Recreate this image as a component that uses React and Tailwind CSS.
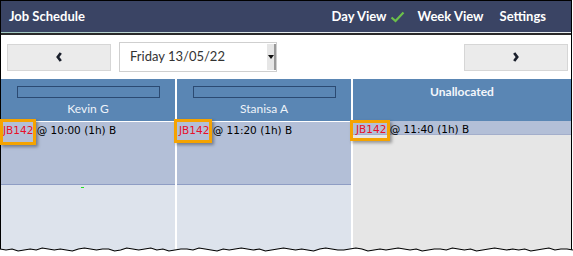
import React from "react";

const tornY = [2,3,2,4,3,2,3,1,2,3,2,3,4,2,1,2,3,2,2,4,3,1,2,3,2,1,3,2,4,3,2,2,3,1,2,3,4,2,3,2,1,2,3,2,4,3,2,1,2,3,2,3,4,2,1,2,3,3,2,1,2,4,3,2,3,2,1,2,3,2,4,3,2,2,3,1,2,3,2,4,3,2,1,2,3,2,3,2,4,3,2,1,3,2,2,3];

function Torn() {
  const pts = [];
  const step = 573 / (tornY.length - 1);
  tornY.forEach((y, i) => pts.push([Math.round(i * step * 10) / 10, y + 1]));
  const line = pts.map((p) => p.join(",")).join(" ");
  const poly = "0,12 " + line + " 573,12";
  return (
    <svg className="absolute left-0 top-[246px]" width="573" height="10" viewBox="0 0 573 10">
      <polygon points={poly} fill="#ffffff" />
      <polyline points={line} fill="none" stroke="#000" strokeWidth="1.2" />
    </svg>
  );
}

function Chevron({ dir }) {
  return (
    <svg width="6" height="10" viewBox="0 0 6 10">
      {dir === "left" ? (
        <path d="M4.8 1 L1.8 5 L4.8 9" fill="none" stroke="#1a1f2b" strokeWidth="2.7" />
      ) : (
        <path d="M1.2 1 L4.2 5 L1.2 9" fill="none" stroke="#1a1f2b" strokeWidth="2.7" />
      )}
    </svg>
  );
}

function Event({ time }) {
  return (
    <div className="pl-[2px] pt-[2px] text-[10.5px] leading-[13px] font-['DejaVu_Sans',sans-serif] text-black whitespace-nowrap">
      <span className="text-[#e8102a]">JB142</span> @ {time} (1h) B
    </div>
  );
}

export default function App() {
  return (
    <div className="w-[573px] h-[256px] bg-white relative overflow-hidden font-['Lato',sans-serif]">
      <div className="w-[572px] h-[256px] border-l border-t border-r border-black flex flex-col">
        <div className="h-[31px] bg-[#3a4464] flex items-center pl-[8px] pr-[25px] text-white text-[13px] font-bold">
          <div>Job Schedule</div>
          <div className="ml-auto flex items-center">
            <span>Day View</span>
            <svg className="ml-[3px]" width="15" height="12" viewBox="0 0 15 12">
              <path d="M1.5 6.5 L5.5 10 L13.5 1.5" fill="none" stroke="#6cc04a" strokeWidth="2.2" />
            </svg>
            <span className="ml-[13px]">Week View</span>
            <span className="ml-[16px]">Settings</span>
          </div>
        </div>
        <div className="h-px bg-gradient-to-r from-[#9fc7c0] via-[#e8eef0] to-[#e8eef0]" />
        <div className="h-[2px] bg-[#2a2a2a]" />
        <div className="h-[44px] flex items-center pl-[6px] pr-[3px]">
          <div className="w-[104px] h-[27px] bg-[#ebebeb] border border-[#d6d6d6] flex items-center justify-center">
            <Chevron dir="left" />
          </div>
          <div className="ml-[8px] w-[158px] h-[30px] border border-[#cfcfcf] bg-white flex items-center">
            <span className="pl-[10px] text-[13px] text-[#333] font-['Lato',sans-serif]">Friday 13/05/22</span>
            <div className="ml-auto h-[26px] w-[9px] bg-[#e6e6e6] border-r-2 border-[#9a9a9a] flex items-center justify-center">
              <svg width="6" height="4" viewBox="0 0 6 4"><path d="M0 0 L6 0 L3 4 Z" fill="#111" /></svg>
            </div>
          </div>
          <div className="ml-auto w-[104px] h-[27px] bg-[#ebebeb] border border-[#d6d6d6] flex items-center justify-center">
            <Chevron dir="right" />
          </div>
        </div>
        <div className="flex-1 grid grid-cols-[174px_174px_1fr] gap-x-[2px] bg-white">
          {[
            { name: "Kevin G", time: "10:00" },
            { name: "Stanisa A", time: "11:20" },
          ].map((c) => (
            <div key={c.name} className="flex flex-col">
              <div className="h-[42px] bg-[#5a86b4] flex flex-col items-center pt-[7px]">
                <div className="w-[143px] h-[12px] border border-[#2b4a72]" />
                <div className="mt-[4px] text-[12px] leading-[14px] text-[#eef3fa]">{c.name}</div>
              </div>
              <div className="h-[1px]" />
              <div className="h-[63px] bg-[#b3bfd7] border-b border-[#8e9dc4]">
                <Event time={c.time} />
              </div>
              <div className="flex-1 bg-[#dde3ec]" />
            </div>
          ))}
          <div className="flex flex-col">
            <div className="h-[42px] bg-[#5a86b4] flex justify-center pt-[6px]">
              <div className="text-[12px] leading-[14px] font-bold text-[#f3f6fb]">Unallocated</div>
            </div>
            <div className="flex-1 bg-[#e6e6e6] pt-[2px]">
              <div className="h-[14px] bg-[#b3bfd7] border-b border-[#a3aecb] pl-[1px]">
                <div className="-mt-[2px]"><Event time="11:40" /></div>
              </div>
            </div>
          </div>
        </div>
      </div>
      <div className="absolute left-[81px] top-[187px] w-[3px] h-[1px] bg-[#22e022]" />
      <div className="absolute left-0 top-[119px] w-[36px] h-[26px] border-[3px] border-[#f5a300] shadow-[2px_2px_3px_rgba(0,0,0,0.35)]" />
      <div className="absolute left-[174px] top-[119px] w-[38px] h-[24px] border-[3px] border-[#f5a300] shadow-[2px_2px_3px_rgba(0,0,0,0.35)]" />
      <div className="absolute left-[350px] top-[120px] w-[40px] h-[21px] border-[3px] border-[#f5a300] shadow-[2px_2px_3px_rgba(0,0,0,0.35)]" />
      <Torn />
    </div>
  );
}
